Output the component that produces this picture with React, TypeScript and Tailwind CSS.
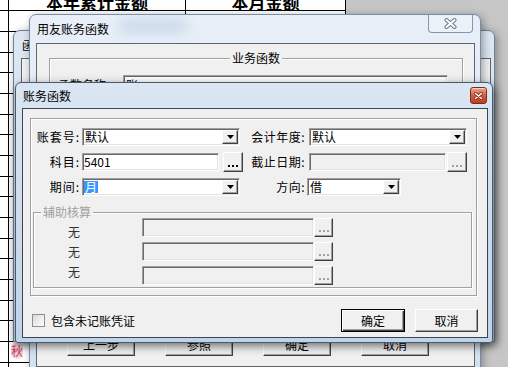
import React from "react";

const raised =
  "bg-[#f0f0f0] border border-t-white border-l-white border-b-[#404040] border-r-[#404040] shadow-[inset_-1px_-1px_0_#a0a0a0]";
const sunken =
  "border border-t-[#a0a0a0] border-l-[#a0a0a0] border-b-white border-r-white shadow-[inset_1px_1px_0_#696969,inset_-1px_-1px_0_#e3e3e3]";
const etched = "border border-[#a0a0a0] shadow-[inset_1px_1px_0_#fff,1px_1px_0_#fff]";

const rowHeights = [21, 21, 20, 21, 21, 20, 21, 21, 20, 21, 21, 20, 21, 21, 20, 21, 21, 21];

function Sheet() {
  return (
    <div className="flex w-[346px] flex-col bg-white">
      <div className="flex h-[11px] border-b border-black">
        <div className="w-[9px] border-r border-black" />
        <div className="flex w-[177px] items-end justify-center overflow-hidden border-r border-black">
          <span className="text-[17px] font-bold leading-[17px]">本年累计金额</span>
        </div>
        <div className="flex w-[160px] items-end justify-center overflow-hidden border-r border-black">
          <span className="text-[17px] font-bold leading-[17px]">本月金额</span>
        </div>
      </div>
      {rowHeights.map((h, i) => (
        <div key={i} className={`flex border-b border-black ${h === 21 ? "h-[21px]" : "h-[20px]"}`}>
          <div className="w-[9px] border-r border-black" />
          <div className="w-[177px] border-r border-black pl-[2px] pt-[2px]">
            {i === 16 && (
              <span className="rounded-full bg-[#f6d5dc] text-[12px] leading-[14px] text-[#c8405c]">秋</span>
            )}
          </div>
          <div className="w-[160px] border-r border-black" />
        </div>
      ))}
    </div>
  );
}

function Arrow() {
  return (
    <svg width="7" height="4" viewBox="0 0 7 4">
      <path d="M0 0h7L3.5 4z" fill="#000" />
    </svg>
  );
}

function Combo({ value, className, selected }: { value: string; className: string; selected?: boolean }) {
  return (
    <div className={`flex h-[18px] items-stretch bg-white p-[1px] ${sunken} ${className}`}>
      <div className={`flex flex-1 items-center ${selected ? "" : "pl-[1px]"}`}>
        {selected ? <span className="bg-[#3399ff] px-[1px] leading-[12px] text-white">{value}</span> : value}
      </div>
      <div className={`flex w-[16px] items-center justify-center ${raised}`}>
        <Arrow />
      </div>
    </div>
  );
}

function Dots({ disabled, className }: { disabled?: boolean; className: string }) {
  return (
    <div className={`flex items-end justify-center gap-[2px] pb-[4px] ${raised} ${className}`}>
      {[0, 1, 2].map((i) => (
        <span key={i} className={`h-[2px] w-[2px] ${disabled ? "bg-[#a0a0a0]" : "bg-black"}`} />
      ))}
    </div>
  );
}

function Btn({ label, isDefault, className }: { label: string; isDefault?: boolean; className: string }) {
  return (
    <div
      className={`flex items-center justify-center bg-[#f0f0f0] ${
        isDefault
          ? "border border-black shadow-[inset_1px_1px_0_#fff,inset_-1px_-1px_0_#404040,inset_-2px_-2px_0_#a0a0a0]"
          : "border border-t-white border-l-white border-b-[#404040] border-r-[#404040] shadow-[inset_-1px_-1px_0_#a0a0a0]"
      } ${className}`}
    >
      {label}
    </div>
  );
}

function WindowB() {
  return (
    <div className="absolute left-[13px] top-[30px] flex h-[312px] w-[482px] flex-col rounded-t-[7px] border border-[#6f8096] bg-linear-to-b from-[#dce7f3] to-[#c9d9ea] shadow-[2px_2px_8px_rgba(0,0,0,0.35)]">
      <div className="flex h-[27px] items-center pl-[8px] pt-[1px]">函数向导</div>
      <div className="ml-[7px] h-[278px] w-[470px] border border-[#5d6670] bg-[#f0f0f0]" />
    </div>
  );
}

function WindowA() {
  return (
    <div className="absolute left-[29px] top-[14px] flex h-[362px] w-[452px] flex-col rounded-t-[7px] border border-[#7b8ca2] bg-linear-to-b from-[#e8eff8] to-[#d3e1ef] shadow-[2px_2px_8px_rgba(0,0,0,0.35)]">
      <div className="relative flex h-[28px] items-start justify-between pl-[7px] pr-[7px]">
        <div className="absolute left-[88px] top-[4px] h-[14px] w-[70px] rounded-full bg-[#a3bcd8] opacity-40 blur-[6px]" />
        <span className="relative mt-[7px]">用友账务函数</span>
        <div className="relative flex h-[18px] w-[45px] items-center justify-center rounded-b-[4px] border border-t-0 border-[#8796a8] bg-[#edf3f9]/60">
          <svg width="13" height="11" viewBox="0 0 13 11">
            <path d="M2.5 2l8 7M10.5 2l-8 7" stroke="#6d7987" strokeWidth="4" strokeLinecap="round" />
            <path d="M2.5 2l8 7M10.5 2l-8 7" stroke="#fff" strokeWidth="2" strokeLinecap="round" />
          </svg>
        </div>
      </div>
      <div className="ml-[6px] flex h-[324px] w-[439px] flex-col border border-[#5c6672] bg-[#f0f0f0]">
        <fieldset className={`ml-[12px] mt-[8px] w-[414px] px-[8px] pb-[8px] ${etched}`}>
          <legend className="mx-auto bg-[#f0f0f0] px-[2px] leading-[12px]">业务函数</legend>
          <div className="mt-[11px] flex items-center">
            <span className="w-[65px]">函数名称:</span>
            <div className={`h-[20px] w-[325px] bg-white pl-[2px] pt-[2px] ${sunken}`}>账</div>
          </div>
        </fieldset>
        <div className="flex-1" />
        <div className="flex gap-[30px] pb-[10px] pl-[30px]">
          <Btn label="上一步" className="h-[23px] w-[68px]" />
          <Btn label="参照" className="h-[23px] w-[68px]" />
          <Btn label="确定" className="h-[23px] w-[68px]" />
          <Btn label="取消" className="h-[23px] w-[68px]" />
        </div>
      </div>
    </div>
  );
}

function FrontDialog() {
  return (
    <div className="absolute left-[15px] top-[82px] flex h-[261px] w-[478px] flex-col rounded-t-[6px] rounded-b-[3px] border border-[#485a70] bg-linear-to-b from-[#dae6f2] via-[#cddcec] to-[#bfd3e9] shadow-[2px_3px_10px_rgba(0,0,0,0.55)]">
      <div className="flex h-[25px] items-center justify-between pl-[7px] pr-[5px]">
        <span>账务函数</span>
        <div className="flex h-[17px] w-[17px] items-center justify-center rounded-[3px] border border-[#7d2d1f] bg-linear-to-b from-[#eaa48f] via-[#d55d40] to-[#bf3a1e] shadow-[inset_0_1px_0_rgba(255,255,255,0.5)]">
          <svg width="9" height="8" viewBox="0 0 9 8">
            <path d="M1.5 1.5l6 5M7.5 1.5l-6 5" stroke="#7a2a1a" strokeWidth="3" strokeLinecap="round" />
            <path d="M1.5 1.5l6 5M7.5 1.5l-6 5" stroke="#fff" strokeWidth="1.6" strokeLinecap="round" />
          </svg>
        </div>
      </div>
      <div className="ml-[6px] flex h-[230px] w-[466px] flex-col border border-[#3d4650] bg-[#f0f0f0] px-[7px]">
        <div className={`mt-[9px] flex h-[178px] w-[447px] flex-col pt-[8px] ${etched}`}>
          <div className="flex flex-col gap-[5px]">
            <div className="flex h-[20px] items-center">
              <div className="flex w-[214px] items-center">
                <span className="w-[49px] text-right tracking-[1px]">账套号:</span>
                <Combo value="默认" className="ml-[2px] w-[158px]" />
              </div>
              <span className="w-[60px] text-right tracking-[0.5px]">会计年度:</span>
              <Combo value="默认" className="ml-[4px] w-[158px]" />
            </div>
            <div className="flex h-[20px] items-center">
              <div className="flex w-[214px] items-center">
                <span className="w-[49px] text-right tracking-[1px]">科目:</span>
                <div className={`ml-[2px] flex h-[18px] w-[137px] items-center bg-white pl-[1px] ${sunken}`}>5401</div>
                <Dots className="ml-[4px] h-[20px] w-[20px]" />
              </div>
              <span className="w-[60px] text-right tracking-[0.5px]">截止日期:</span>
              <div className={`ml-[4px] h-[18px] w-[137px] bg-[#f0f0f0] ${sunken}`} />
              <Dots disabled className="ml-[1px] h-[20px] w-[20px]" />
            </div>
            <div className="flex h-[20px] items-center">
              <div className="flex w-[214px] items-center">
                <span className="w-[49px] text-right tracking-[1px]">期间:</span>
                <Combo value="月" selected className="ml-[2px] w-[158px]" />
              </div>
              <span className="w-[60px] text-right tracking-[0.5px]">方向:</span>
              <Combo value="借" className="ml-[2px] w-[94px]" />
            </div>
          </div>
          <fieldset className={`ml-[2px] mt-[9px] w-[439px] pb-[2px] ${etched}`}>
            <legend className="ml-[7px] bg-[#f0f0f0] px-[2px] leading-[12px] text-[#a0a0a0]">辅助核算</legend>
            <div className="flex">
              <div className="flex w-[108px] flex-col gap-[6px] pl-[34px] pt-[7px] text-[#333]">
                <span>无</span>
                <span>无</span>
                <span>无</span>
              </div>
              <div className="flex flex-col gap-[5px]">
                {[0, 1, 2].map((i) => (
                  <div key={i} className="flex">
                    <div className={`h-[19px] w-[172px] bg-[#f0f0f0] ${sunken}`} />
                    <Dots disabled className="h-[19px] w-[19px]" />
                  </div>
                ))}
              </div>
            </div>
          </fieldset>
        </div>
        <div className="mt-[13px] flex h-[23px] items-center">
          <div className="ml-[2px] h-[13px] w-[13px] border border-[#8e8f8f] bg-linear-to-br from-[#dadada] to-white" />
          <span className="ml-[6px]">包含未记账凭证</span>
          <div className="flex-1" />
          <Btn label="确定" isDefault className="h-[23px] w-[64px]" />
          <Btn label="取消" className="ml-[10px] mr-[2px] h-[23px] w-[63px]" />
        </div>
      </div>
    </div>
  );
}

export default function App() {
  return (
    <div className="relative h-[367px] w-[508px] overflow-hidden bg-[#c6c6c6] font-['Noto_Sans_CJK_SC',sans-serif] text-[12px] leading-[14px] text-black">
      <Sheet />
      <WindowB />
      <WindowA />
      <FrontDialog />
    </div>
  );
}
